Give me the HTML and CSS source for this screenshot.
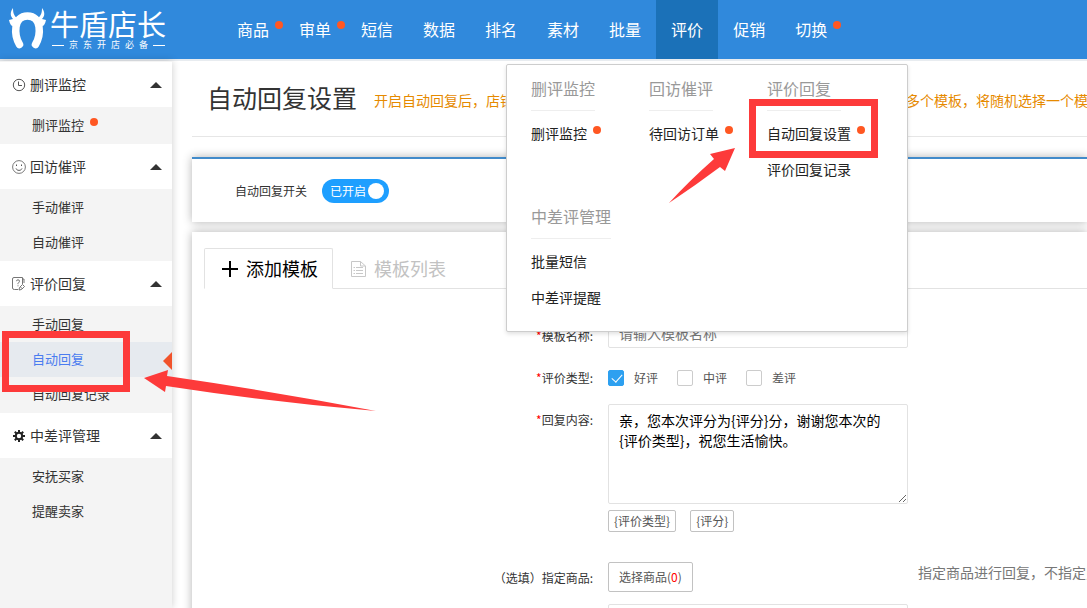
FILE: index.html
```html
<!DOCTYPE html>
<html lang="zh-CN">
<head>
<meta charset="utf-8">
<title>自动回复设置</title>
<link rel="stylesheet" href="styles.css">
</head>
<body>
<header class="topbar">
  <a class="logo" href="#">
    <svg class="logo-mark" width="38" height="42" viewBox="0 0 38 42" fill="#fff">
      <path d="M4 0C1 4 1 8 4 11L0 12C1 16 2 18 4 18L9 11C5 8 4 5 4 0ZM33 0C36 4 36 8 33 11L37 12C36 16 35 18 33 18L28 11C32 8 33 5 33 0Z"/>
      <path d="M10.500 36.500C5 27 4 8 18.500 8C33 8 32 27 26.500 36.500" fill="none" stroke="#fff" stroke-width="7.500" stroke-linecap="round"/>
    </svg>
    <span class="logo-words">
      <span class="logo-name">牛盾店长</span>
      <span class="logo-sub"><i></i><span>京</span><span>东</span><span>开</span><span>店</span><span>必</span><span>备</span><i></i></span>
    </span>
  </a>
  <nav class="nav">
    <a href="#">商品<b class="dot"></b></a>
    <a href="#">审单<b class="dot"></b></a>
    <a href="#">短信</a>
    <a href="#">数据</a>
    <a href="#">排名</a>
    <a href="#">素材</a>
    <a href="#">批量</a>
    <div class="nav-drop">
      <a class="active" href="#">评价</a>
      <div class="mega">
        <section><h3>删评监控</h3><a href="#">删评监控<b class="dot"></b></a></section>
        <section><h3>回访催评</h3><a href="#">待回访订单<b class="dot"></b></a></section>
        <section class="wide"><h3>评价回复</h3><a href="#">自动回复设置<b class="dot"></b></a><a href="#">评价回复记录</a></section>
        <section><h3>中差评管理</h3><a href="#">批量短信</a><a href="#">中差评提醒</a></section>
      </div>
    </div>
    <a href="#">促销</a>
    <a href="#">切换<b class="dot"></b></a>
  </nav>
</header>

<div class="layout">
  <aside class="sidebar">
    <button class="group" type="button">
      <svg width="14" height="14" viewBox="0 0 14 14" fill="none" stroke="#555"><circle cx="7" cy="7" r="5.700"/><path d="M6.500 3.500V7.500H10"/></svg>
      <span>删评监控</span><i class="caret"></i>
    </button>
    <div class="subs"><a href="#">删评监控<b class="dot"></b></a></div>
    <button class="group" type="button">
      <svg width="14" height="14" viewBox="0 0 14 14" fill="none" stroke="#555"><circle cx="7" cy="7" r="6.400" stroke-width=".8"/><path d="M4.500 4.500V6M9.500 4.500V6M4 8.500C5 11 9 11 10 8.500"/></svg>
      <span>回访催评</span><i class="caret"></i>
    </button>
    <div class="subs"><a href="#">手动催评</a><a href="#">自动催评</a></div>
    <button class="group" type="button">
      <svg width="14" height="14" viewBox="0 0 14 14" fill="none" stroke="#666" stroke-width=".9"><path d="M6 12.500H2.500Q.5 12.500 .5 11V2Q.5 .5 2 .5H10.500V7M10.500 2H12V6"/><path d="M4.500 4.200Q4.500 2.800 6 2.800T7.500 4.200Q7.500 5 6 6.300V7.200M6 8.300V9.300"/><path d="M7 13L7.500 10.500L10.500 7.500L12.500 9.500L9.500 12.500ZM8.500 10L10.500 12"/></svg>
      <span>评价回复</span><i class="caret"></i>
    </button>
    <div class="subs"><a href="#">手动回复</a><a class="current" href="#">自动回复</a><a href="#">自动回复记录</a></div>
    <button class="group" type="button">
      <svg width="14" height="14" viewBox="0 0 14 14" fill="none" stroke="#222"><circle cx="7" cy="7" r="3.200" stroke-width="2"/><path d="M7 1V3.500M7 10.500V13M1 7H3.500M10.500 7H13M2.800 2.800L4.500 4.500M9.500 9.500L11.200 11.200M2.800 11.200L4.500 9.500M9.500 4.500L11.200 2.800" stroke-width="2"/></svg>
      <span>中差评管理</span><i class="caret"></i>
    </button>
    <div class="subs"><a href="#">安抚买家</a><a href="#">提醒卖家</a></div>
  </aside>

  <main class="content">
    <div class="page-head">
      <h1>自动回复设置</h1>
      <p>开启自动回复后，店铺收到的新评价将会按照所设置的模板自动进行回复，如果添加了多个模板，将随机选择一个模板</p>
    </div>
    <section class="panel switch-panel">
      <span id="switch-label">自动回复开关</span>
      <button class="switch" type="button" role="switch" aria-checked="true" aria-labelledby="switch-label">已开启<i></i></button>
    </section>
    <section class="panel form-panel">
      <div class="tabs">
        <button class="tab on" type="button"><svg width="16" height="16" viewBox="0 0 16 16" stroke="#000" stroke-width="2"><path d="M0 8H16M8 0V16"/></svg><span>添加模板</span></button>
        <button class="tab" type="button"><svg width="15" height="16" viewBox="0 0 15 16" fill="none" stroke="#c8c8c8"><path d="M.5 .5H9.500L14.500 5V15.500H.5ZM9.500 .5V5H14.500M2.500 6.500H4M5 6.500H12M2.500 9.500H4M5 9.500H12M2.500 12.500H4M5 12.500H12"/></svg><span>模板列表</span></button>
      </div>
      <form class="form">
        <div class="row">
          <label class="caption" for="tpl-name"><em>*</em>模板名称:</label>
          <input class="text" id="tpl-name" type="text" placeholder="请输入模板名称">
        </div>
        <div class="row" role="group" aria-labelledby="kind-label">
          <span class="caption" id="kind-label"><em>*</em>评价类型:</span>
          <div class="checks">
            <label><input type="checkbox" checked>好评</label>
            <label><input type="checkbox">中评</label>
            <label><input type="checkbox">差评</label>
          </div>
        </div>
        <div class="row">
          <label class="caption" for="reply"><em>*</em>回复内容:</label>
          <div class="reply">
            <textarea id="reply">亲，您本次评分为{评分}分，谢谢您本次的{评价类型}，祝您生活愉快。</textarea>
            <div class="tokens"><button type="button">{评价类型}</button><button type="button">{评分}</button></div>
          </div>
        </div>
        <div class="row goods">
          <span class="caption">（选填）指定商品:</span>
          <div><button class="pick" type="button">选择商品(<em>0</em>)</button></div>
          <p class="hint">指定商品进行回复，不指定则全部</p>
        </div>
        <div class="row">
          <span class="caption"></span>
          <input class="text" type="text" aria-label="商品">
        </div>
      </form>
    </section>
  </main>
</div>

<svg class="marks" width="880" height="420" viewBox="0 0 880 420" fill="#fd3a3a" aria-hidden="true">
  <rect x="752.500" y="102.500" width="122" height="52" fill="none" stroke="#fd3a3a" stroke-width="7"/>
  <rect x="5.500" y="334.500" width="121" height="54" fill="none" stroke="#fd3a3a" stroke-width="7"/>
  <path d="M735 148L710 154L714 159Q689 181 669 203Q696 185 720 167L725 171Z"/>
  <path d="M144 378L168 370L167 376Q270 391 376 411Q270 402 166 386L165 392Z"/>
</svg>
</body>
</html>
```

FILE: styles.css
```css
* { box-sizing: border-box; }
body {
  margin: 0;
  height: 100vh;
  display: flex;
  flex-direction: column;
  overflow: hidden;
  background: #fff;
  color: #333;
  font: 14px/20px "Noto Sans CJK SC", sans-serif;
}
button, input, textarea { font: inherit; color: inherit; margin: 0; }
button { background: none; border: 0; padding: 0; cursor: pointer; }
a { color: inherit; text-decoration: none; }
h1, h3, p { margin: 0; font-weight: 400; }
em, i { font-style: normal; }
em { color: #f00; }

.dot {
  position: absolute;
  width: 8px;
  height: 8px;
  border-radius: 50%;
  background: #ff5722;
}

/* Top bar */
.topbar {
  flex: none;
  display: flex;
  height: 61px;
  background: #3089dc;
  border-bottom: 2px solid #e8ecf0;
}
.logo {
  display: flex;
  width: 222px;
  padding-left: 9px;
  gap: 3px;
  color: #fff;
}
.logo-mark { margin-top: 8px; }
.logo-words { display: flex; flex-direction: column; }
.logo-name { font-size: 29px; line-height: 42px; margin-top: 2px; height: 37px; }
.logo-sub {
  display: flex;
  align-items: center;
  gap: 5px;
  padding-left: 2px;
  font-size: 9px;
  line-height: 12px;
}
.logo-sub i { width: 12px; height: 1px; background: #fff; }
.nav { display: flex; font-size: 16px; color: #fff; }
.nav > a, .nav-drop > a {
  position: relative;
  display: block;
  height: 59px;
  padding: 0 15px;
  line-height: 58px;
}
.nav > a .dot { top: 21px; right: 1px; }
.nav .active { background: #1b71b8; }
.nav-drop { position: relative; }

.mega {
  position: absolute;
  z-index: 5;
  top: 64px;
  left: -150px;
  width: 402px;
  display: grid;
  grid-template-columns: repeat(3, 118px);
  row-gap: 17px;
  padding: 11px 0 16px 24px;
  background: #fff;
  border: 1px solid #cdcdcd;
  border-radius: 2px;
  box-shadow: 0 2px 4px rgba(0, 0, 0, .12);
  font-size: 14px;
  color: #222;
}
.mega section { display: flex; flex-direction: column; align-items: flex-start; }
.mega h3 {
  margin-bottom: 4px;
  padding: 0 0 9px;
  border-bottom: 1px solid #eee;
  font-size: 16px;
  line-height: 25px;
  color: #999;
}
.mega .wide h3 { padding-right: 10px; }
.mega section a { position: relative; line-height: 36px; }
.mega .dot { top: 11px; right: -14px; }

/* Side menu */
.layout { flex: 1; min-height: 0; display: flex; }
.sidebar {
  position: relative;
  z-index: 1;
  flex: none;
  width: 172px;
  padding-top: 1px;
  background: #f4f4f4;
  box-shadow: 0 0 8px rgba(0, 0, 0, .2);
}
.group {
  display: flex;
  align-items: center;
  gap: 4px;
  width: 100%;
  height: 45px;
  padding: 0 10px 0 12px;
  background: #fff;
}
.group span, .tab span { padding-bottom: 2px; }
.caret {
  margin-left: auto;
  border: 6px solid transparent;
  border-top: 0;
  border-bottom-color: #333;
}
.subs { padding: 1px 0; font-size: 13px; }
.subs a { position: relative; display: block; height: 35px; padding-left: 32px; line-height: 34px; }
.subs .dot { top: 10px; left: 90px; }
.subs .current { background: #e6eaef; color: #4a7cf0; }
.subs .current::after {
  content: "";
  position: absolute;
  top: 10px;
  right: 0;
  border: 9px solid transparent;
  border-left: 0;
  border-right-color: #f1532b;
}

/* Main area */
.content { flex: 1; min-width: 0; padding-left: 20px; overflow: hidden; }
.page-head {
  display: flex;
  align-items: center;
  gap: 17px;
  height: 76px;
  padding: 0 0 3px 15px;
  border-bottom: 1px solid #e6e6e6;
  white-space: nowrap;
}
.page-head h1 { font-size: 25px; line-height: 36px; }
.page-head p { padding-top: 6px; color: #e68a00; }
.panel { background: #fff; box-shadow: 0 0 9px rgba(0, 0, 0, .3); }
.switch-panel {
  display: flex;
  align-items: center;
  gap: 15px;
  height: 65px;
  margin: 20px 0 10px;
  padding-left: 43px;
  border-top: 2px solid #428bca;
  font-size: 12px;
}
.switch {
  display: flex;
  align-items: center;
  gap: 2px;
  height: 24px;
  padding: 0 5px 0 8px;
  border-radius: 12px;
  background: #1e9fff;
  color: #fff;
}
.switch i { width: 16px; height: 16px; border-radius: 50%; background: #fff; }
.form-panel { padding: 16px 0 10px 12px; }
.tabs { display: flex; height: 41px; border-bottom: 1px solid #e2e2e2; font-size: 18px; }
.tab {
  display: flex;
  align-items: center;
  gap: 8px;
  height: 41px;
  padding: 0 18px;
  color: #c2c2c2;
}
.tab.on {
  padding: 0 14px 0 17px;
  border: 1px solid #e2e2e2;
  border-bottom-color: #fff;
  border-radius: 2px 2px 0 0;
  color: #000;
}
.form { display: flex; flex-direction: column; gap: 10px; padding-top: 31px; font-size: 12px; }
.row {
  display: grid;
  grid-template-columns: 389px 300px 1fr;
  column-gap: 15px;
  align-items: start;
  min-height: 32px;
}
.caption { line-height: 32px; text-align: right; }
.text, textarea {
  display: block;
  width: 100%;
  border: 1px solid #e2e2e2;
  border-radius: 2px;
  background: #fff;
  font-size: 14px;
}
.text { height: 28px; padding: 0 10px 2px; }
.text::placeholder { color: #757575; }
textarea { height: 100px; padding: 5px 10px; line-height: 20px; color: #000; }
.checks { display: flex; gap: 19px; height: 32px; color: #555; }
.checks label { display: flex; align-items: center; gap: 10px; }
.checks input {
  appearance: none;
  position: relative;
  width: 16px;
  height: 16px;
  border: 1px solid #ccc;
  border-radius: 2px;
}
.checks input:checked { background: #2da0f0; border-color: #2da0f0; }
.checks input:checked::after {
  content: "";
  position: absolute;
  left: 5px;
  top: 1px;
  width: 5px;
  height: 9px;
  border: solid #fff;
  border-width: 0 1px 1px 0;
  transform: rotate(42deg);
}
.reply { display: flex; flex-direction: column; gap: 6px; }
.tokens { display: flex; gap: 14px; }
.tokens button, .pick { border: 1px solid #c2c2c2; border-radius: 2px; color: #555; }
.tokens button { height: 22px; padding: 0 5px; line-height: 20px; }
.goods { margin-top: 20px; }
.pick { height: 30px; padding: 0 10px; }
.hint { margin-left: -5px; overflow: hidden; white-space: nowrap; font-size: 14px; color: #777; }

/* Red call-outs drawn over the page */
.marks { position: absolute; z-index: 10; top: 0; left: 0; pointer-events: none; }
```
